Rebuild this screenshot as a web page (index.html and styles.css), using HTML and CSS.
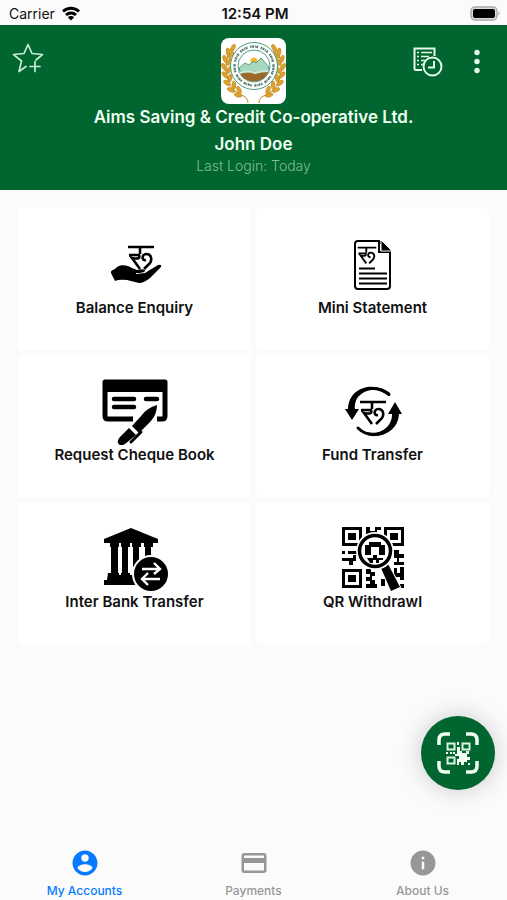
FILE: index.html
```html
<!DOCTYPE html>
<html lang="en">
    <head>
        <meta charset="UTF-8">
        <meta name="viewport" content="width=device-width, initial-scale=1.0">
        <title>Aims Saving & Credit Co-operative Ltd.</title>
        <link rel="stylesheet" href="styles.css">
    </head>
    <body>
        <!-- shared currency sign -->
        <svg class="defs" aria-hidden="true">
            <symbol id="rupee" viewBox="0 0 28 26">
                <g fill="none" stroke="#000" stroke-width="2.6">
                    <path d="M1 2H27M13 2V9"/>
                    <path d="M2 10H12Q14 15 5 13L13 24"/>
                    <path d="M19 15C14 16 15 9 19 9C25 9 26 16 21 20L17 24"/>
                </g>
            </symbol>
        </svg>

        <div class="status-bar">
            <div class="carrier">
                <span>Carrier</span>
                <svg width="20" height="15" viewBox="0 0 20 15">
                    <path d="M2 5.5A11.5 11.5 0 0 1 18 5.5M5 9A7.2 7.2 0 0 1 15 9" fill="none" stroke="#000" stroke-width="2.8"/>
                    <path d="M10 14.5L6.8 11.3A4.5 4.5 0 0 1 13.2 11.3Z"/>
                </svg>
            </div>
            <span class="time">12:54 PM</span>
            <div class="battery">
                <svg width="31" height="15" viewBox="0 0 31 15">
                    <rect x="1" y="1" width="26" height="13" rx="4" fill="#ddd" stroke="#aaa" stroke-width="1.5"/>
                    <rect x="3" y="3" width="22" height="9" rx="2"/>
                    <path d="M28.5 5V10Q31 7.5 28.5 5" fill="#aaa"/>
                </svg>
            </div>
        </div>

        <header class="header">
            <button class="icon-btn" aria-label="Add to favourites">
                <svg width="34" height="32" viewBox="0 0 34 32" fill="none" stroke="#c6ecd2" stroke-width="1.7" stroke-linejoin="round" stroke-linecap="round">
                    <path d="M14 23.5L7 28.5L9.5 18L1.5 11.5L12 10.5L16 1.5L20 10.5L30.5 11.5L24 17"/>
                    <path d="M23 18.5V28.5M18 23.5H28"/>
                </svg>
            </button>
            <div class="profile">
                <svg class="logo" width="65" height="66" viewBox="0 0 65 66">
                    <rect width="65" height="66" rx="8" fill="#fff"/>
                    <!-- wheat on both sides -->
                    <g id="wheat">
                        <path d="M12 8C1 23 2 48 20 57Q27 59 27 65" fill="none" stroke="#c08a22" stroke-width="1"/>
                        <g fill="#dca22d" stroke="#b67b15" stroke-width=".4">
                            <ellipse cx="12" cy="10" rx="2" ry="4" transform="rotate(25 12 10)"/>
                            <ellipse cx="7" cy="14" rx="2" ry="4" transform="rotate(-8 7 14)"/>
                            <ellipse cx="10" cy="17" rx="2" ry="4" transform="rotate(42 10 17)"/>
                            <ellipse cx="4" cy="21" rx="2" ry="4" transform="rotate(-20 4 21)"/>
                            <ellipse cx="8" cy="24" rx="2" ry="4" transform="rotate(35 8 24)"/>
                            <ellipse cx="3" cy="29" rx="2" ry="4" transform="rotate(-30 3 29)"/>
                            <ellipse cx="8" cy="32" rx="2" ry="4" transform="rotate(25 8 32)"/>
                            <ellipse cx="4" cy="37" rx="2" ry="4" transform="rotate(-42 4 37)"/>
                            <ellipse cx="9" cy="40" rx="2" ry="4" transform="rotate(12 9 40)"/>
                            <ellipse cx="6" cy="45" rx="2" ry="4" transform="rotate(-55 6 45)"/>
                            <ellipse cx="13" cy="47" rx="2" ry="4" transform="rotate(-5 13 47)"/>
                            <ellipse cx="10" cy="52" rx="2" ry="4" transform="rotate(-65 10 52)"/>
                            <ellipse cx="18" cy="52" rx="2" ry="4" transform="rotate(-22 18 52)"/>
                            <ellipse cx="17" cy="57" rx="2" ry="4" transform="rotate(-75 17 57)"/>
                        </g>
                    </g>
                    <use href="#wheat" transform="matrix(-1 0 0 1 65 0)"/>
                    <circle cx="33" cy="28" r="23.5" fill="#fff" stroke="#4d9b80" stroke-width="1"/>
                    <circle cx="33" cy="28" r="19.5" fill="none" stroke="#5d7d6f" stroke-width="2.4" stroke-dasharray="1.5 .6 2 .8 1 .5 2 2.5"/>
                    <circle cx="33" cy="28" r="16" fill="#fff" stroke="#4d9b80" stroke-width="1"/>
                    <circle cx="33" cy="23" r="3.5" fill="#f6bc2b"/>
                    <path d="M18 30L24 25L28 27L33 23L35 25L40 20L48 29L46 36H20Z" fill="#a6d8bf" stroke="#438873" stroke-width=".8"/>
                    <path d="M19 35Q33 33 47 34Q44 43 33 43.5Q22 43 19 35" fill="#9b6a2b"/>
                    <path d="M19 35Q26 32 34 35Q40 33 47 33" fill="none" stroke="#c9e9d9" stroke-width="2"/>
                </svg>
                <h1>Aims Saving &amp; Credit Co-operative Ltd.</h1>
                <h2>John Doe</h2>
                <p>Last Login: Today</p>
            </div>
            <div class="actions">
                <button class="icon-btn" aria-label="History">
                    <svg width="30" height="30" viewBox="0 0 30 30" fill="none" stroke="#e6faec" stroke-width="2">
                        <path d="M9 23H3Q1.5 23 1.5 21.5V1.5H21.5V9"/>
                        <path d="M4 5.5H6M8 5.5H19M4 9.5H6M8 9.5H16M4 13.5H6M8 13.5H12M4 17.5H6M8 17.5H10" stroke-width="1.6"/>
                        <circle cx="19.5" cy="19.5" r="9"/>
                        <path d="M21 14V20.5H15"/>
                    </svg>
                </button>
                <button class="icon-btn" aria-label="More options">
                    <svg width="36" height="30" viewBox="0 0 36 30" fill="#e6faec">
                        <circle cx="18" cy="5.5" r="2.7"/>
                        <circle cx="18" cy="14.5" r="2.7"/>
                        <circle cx="18" cy="23.5" r="2.7"/>
                    </svg>
                </button>
            </div>
        </header>

        <main class="services">
            <button class="card">
                <svg width="68" height="68" viewBox="0 0 68 68">
                    <use href="#rupee" x="26" y="15" width="28" height="26"/>
                    <path d="M10 43C9 40 14 40 16 37C20 34 27 35 31 38L36 40Q44 38 44 41Q43 43 35 43V44L44 43L57 35Q61 34 60 37L49 48Q43 53 38 53L26 50Q18 49 14 51Z"/>
                </svg>
                <span>Balance Enquiry</span>
            </button>
            <button class="card">
                <svg width="68" height="68" viewBox="0 0 68 68">
                    <path d="M40 11H19Q16 11 16 14V56Q16 59 19 59H48Q51 59 51 56V22ZM40 11V22H51" fill="none" stroke="#000" stroke-width="2"/>
                    <path d="M42 10L53 21H42Z" stroke="#fff" stroke-width="1"/>
                    <use href="#rupee" x="18" y="16" width="20" height="19"/>
                    <path d="M20 38.5H36M20 43.5H48M20 48.5H48M20 53.5H48" stroke="#000" stroke-width="2.2"/>
                </svg>
                <span>Mini Statement</span>
            </button>
            <button class="card">
                <svg width="68" height="68" viewBox="0 0 68 68">
                    <path d="M32 42H7Q4 42 4 39V5H64V39Q64 42 61 42H56" fill="none" stroke="#000" stroke-width="5" stroke-linejoin="round"/>
                    <path d="M3 4H65V15H3Z"/>
                    <path d="M13 22H33M13 30H33M45 22H56" stroke="#000" stroke-width="4.5" stroke-linecap="round"/>
                    <path d="M56 28Q46 31 41 38L31 49L38 56L50 44Q56 37 56 28Z" stroke="#fff" stroke-width="3" paint-order="stroke"/>
                    <path d="M28 51L35 58L24 67Q19 70 17 66Q16 63 19 60Z"/>
                    <path d="M40 55L30 65" stroke="#000" stroke-width="3" stroke-linecap="round"/>
                </svg>
                <span>Request Cheque Book</span>
            </button>
            <button class="card">
                <svg width="68" height="68" viewBox="0 0 68 68">
                    <path d="M51 16C36 4 9 9 9 33H16C14 15 34 6 50 19Z"/>
                    <path d="M6 32H20L13 43Z"/>
                    <path d="M18 50C34 67 60 57 60 36H53C54 53 35 62 19 51Z"/>
                    <path d="M49 37H63L56 25Z"/>
                    <path d="M50 17.5C38 8 26 11 20 17M19 51C29 61 43 58 48 53" fill="none" stroke="#000" stroke-width="3" stroke-linecap="round"/>
                    <use href="#rupee" x="20" y="23" width="28" height="26"/>
                </svg>
                <span>Fund Transfer</span>
            </button>
            <button class="card">
                <svg width="68" height="68" viewBox="0 0 68 68">
                    <path d="M30 4L57 15V19H3V15Z"/>
                    <path d="M9 19H18V23H17V50H10V23H9ZM20 19H29V23H27V50H21V23H20ZM31 19H40V23H38V50H32V23H31ZM43 19H52V23H50V50H44V23H43Z"/>
                    <path d="M7 49H18V51H20V49H29V51H31V49H40V55H42V61H3V56H6Z"/>
                    <circle cx="50" cy="50" r="18" stroke="#fff" stroke-width="2"/>
                    <path d="M41 45H58M53 39L59 45L53 50M59 55H42M47 49L41 55L47 61" fill="none" stroke="#fff" stroke-width="2.4"/>
                </svg>
                <span>Inter Bank Transfer</span>
            </button>
            <button class="card">
                <svg width="68" height="68" viewBox="0 0 68 68">
                    <path d="M4.5 4.5H21.5V20.5H4.5ZM46.5 4.5H63.5V20.5H46.5ZM4.5 46.5H21.5V62.5H4.5Z" fill="none" stroke="#000" stroke-width="3"/>
                    <path d="M9 9H17V16H9ZM51 9H59V16H51ZM9 51H17V58H9Z"/>
                    <path d="M27 3H31V7H36V3H42V6H38V10H27ZM3 27H6V30H3ZM9 27H18V30H9ZM3 34H14V31H17V37H14V41H10V37H3ZM55 26H60V30H65V34H60V38H65V41H55V38H58V34H55ZM55 44H58V49H61V43H65V56H61V53H55ZM27 45H32V48H36V52H33V56H36V60H38V64H27V60H31V57H27V53H31V50H27ZM42 55H46V62H42ZM61 60H65V64H61Z"/>
                    <path d="M42 44L49 40L61 63L52 67Z" stroke="#fff" stroke-width="2" paint-order="stroke"/>
                    <circle cx="36" cy="27" r="19" fill="#fff"/>
                    <circle cx="36" cy="27" r="15.5" fill="#fff" stroke="#000" stroke-width="3.5"/>
                    <path d="M26 21H30V18H42V21H46V31H40V23H32V31H26ZM28 34H34V31H38V34H44V36H40V39H37V36H34V39H31Z"/>
                </svg>
                <span>QR Withdrawl</span>
            </button>
        </main>

        <button class="scan-btn" aria-label="Scan QR code">
            <svg width="42" height="42" viewBox="0 0 42 42">
                <path d="M2 13V8Q2 2 8 2H13M29 2H34Q40 2 40 8V13M40 29V34Q40 40 34 40H29M13 40H8Q2 40 2 34V29" fill="none" stroke="#f4fff4" stroke-width="3.5"/>
                <path d="M10.5 11.5H17.5V17.5H10.5ZM25.5 11.5H32.5V17.5H25.5ZM10.5 25.5H17.5V31.5H10.5Z" fill="none" stroke="#d9f5df" stroke-width="2"/>
                <path d="M20 10H22V13H20ZM20 15H23V19H25V21H29V19H32V22H30V25H33V28H30V30H27V33H24V30H22V33H20V27H22V24H18V22H20ZM9 20H11V22H9ZM13 20H15V22H13ZM16 20H18V22H16ZM31 31H33V33H31Z" fill="#f4fff4"/>
            </svg>
        </button>

        <nav class="tab-bar">
            <a href="#" class="active">
                <svg width="30" height="30" viewBox="0 0 24 24" fill="currentColor">
                    <path d="M12 2C6.48 2 2 6.48 2 12s4.48 10 10 10 10-4.48 10-10S17.52 2 12 2zm0 3c1.66 0 3 1.34 3 3s-1.34 3-3 3-3-1.34-3-3 1.34-3 3-3zm0 14.2c-2.5 0-4.71-1.28-6-3.22.03-1.99 4-3.08 6-3.08 1.99 0 5.97 1.09 6 3.08-1.29 1.94-3.5 3.22-6 3.22z"/>
                </svg>
                My Accounts
            </a>
            <a href="#">
                <svg width="30" height="30" viewBox="0 0 24 24" fill="currentColor">
                    <path d="M20 4H4c-1.11 0-1.99.89-1.99 2L2 18c0 1.11.89 2 2 2h16c1.11 0 2-.89 2-2V6c0-1.11-.89-2-2-2zm0 14H4v-6h16v6zm0-10H4V6h16v2z"/>
                </svg>
                Payments
            </a>
            <a href="#">
                <svg width="30" height="30" viewBox="0 0 24 24" fill="currentColor">
                    <path d="M12 2C6.48 2 2 6.48 2 12s4.48 10 10 10 10-4.48 10-10S17.52 2 12 2zm1 15h-2v-6h2v6zm0-8h-2V7h2v2z"/>
                </svg>
                About Us
            </a>
        </nav>
    </body>
</html>
```
FILE: styles.css
```css
* {
    box-sizing: border-box;
}
body {
    margin: 0;
    min-height: 100vh;
    display: flex;
    flex-direction: column;
    background-color: #fbfbfb;
    font-family: Inter, "Liberation Sans", sans-serif;
    color: #111;
}
button {
    border: none;
    padding: 0;
    background: none;
    font-family: inherit;
    color: inherit;
    cursor: pointer;
}
svg {
    display: block;
}
.defs {
    position: absolute;
    width: 0;
    height: 0;
}
.status-bar {
    display: grid;
    grid-template-columns: 1fr auto 1fr;
    align-items: center;
    height: 25px;
    padding: 2px 6px 0 9px;
    font-size: 14px;
}
.carrier {
    display: flex;
    align-items: center;
    gap: 6px;
}
.time {
    font-size: 15px;
    font-weight: 600;
}
.battery {
    justify-self: end;
}
.header {
    display: grid;
    grid-template-columns: 1fr auto 1fr;
    align-items: start;
    padding: 13px 12px 16px;
    background-color: #00652e;
    color: #effff2;
}
.header .icon-btn {
    padding-top: 5px;
}
.profile {
    display: flex;
    flex-direction: column;
    align-items: center;
    white-space: nowrap;
}
.profile h1,
.profile h2 {
    margin: 0;
    font-size: 17px;
    line-height: 27px;
    font-weight: 600;
}
.profile p {
    margin: 0;
    font-size: 14px;
    line-height: 16px;
    font-weight: 300;
    color: #83bd98;
}
.header > .icon-btn {
    justify-self: start;
}
.actions {
    display: flex;
    justify-self: end;
    gap: 16px;
    /* keeps the title centred between the two sides */
    width: 0;
    justify-content: flex-end;
    padding-top: 4px;
}
.services {
    flex: 1;
    display: grid;
    grid-template-columns: 1fr 1fr;
    align-content: start;
    gap: 5px;
    padding: 18px 18px 0;
}
.card {
    display: flex;
    flex-direction: column;
    align-items: center;
    justify-content: flex-start;
    padding: 22px 0 32px;
    background-color: #fff;
    border-radius: 3px;
    font-size: 15px;
    line-height: 20px;
    font-weight: 600;
}
.scan-btn {
    position: fixed;
    right: 12px;
    bottom: 110px;
    display: flex;
    align-items: center;
    justify-content: center;
    width: 74px;
    height: 74px;
    border-radius: 50%;
    background-color: #00652e;
    box-shadow: 0 0 24px rgba(0, 0, 0, 0.2);
}
.tab-bar {
    display: grid;
    grid-template-columns: repeat(3, 1fr);
    padding-bottom: 1px;
}
.tab-bar a {
    display: flex;
    flex-direction: column;
    align-items: center;
    gap: 5px;
    font-size: 12px;
    line-height: 16px;
    font-weight: 500;
    color: #979797;
    text-decoration: none;
}
.tab-bar .active {
    color: #067bff;
}
```
